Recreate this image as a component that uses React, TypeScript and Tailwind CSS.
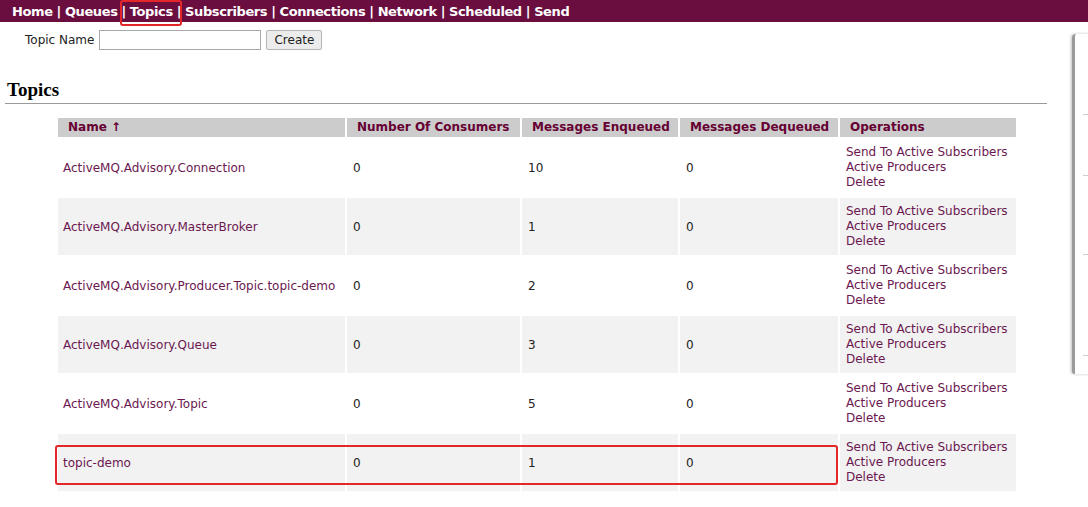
import React from 'react';

const navItems = ['Home', 'Queues', 'Topics', 'Subscribers', 'Connections', 'Network', 'Scheduled', 'Send'];

const topics = [
  { name: 'ActiveMQ.Advisory.Connection', consumers: 0, enqueued: 10, dequeued: 0 },
  { name: 'ActiveMQ.Advisory.MasterBroker', consumers: 0, enqueued: 1, dequeued: 0 },
  { name: 'ActiveMQ.Advisory.Producer.Topic.topic-demo', consumers: 0, enqueued: 2, dequeued: 0 },
  { name: 'ActiveMQ.Advisory.Queue', consumers: 0, enqueued: 3, dequeued: 0 },
  { name: 'ActiveMQ.Advisory.Topic', consumers: 0, enqueued: 5, dequeued: 0 },
  { name: 'topic-demo', consumers: 0, enqueued: 1, dequeued: 0 },
];

const headers = ['Name ↑', 'Number Of Consumers', 'Messages Enqueued', 'Messages Dequeued', 'Operations'];

export default function App() {
  return (
    <div className="relative w-[1088px] h-[507px] overflow-hidden bg-white font-['DejaVu_Sans',sans-serif] text-[12px] text-[#222]">
      {/* Nav bar */}
      <div className="h-[22px] bg-[#6a0d3f] pl-[12px] pt-[1px] flex items-center text-[13px] font-bold text-white tracking-[-0.4px] whitespace-nowrap">
        {navItems.map((item, i) => (
          <span key={item}>
            {item}
            {i < navItems.length - 1 && <span className="px-[4px]">|</span>}
          </span>
        ))}
      </div>

      {/* Create form */}
      <div className="flex items-center h-[30px] mt-[3px] pl-[25px] gap-[4px]">
        <span className="text-[12px] text-[#222]">Topic Name</span>
        <input className="ml-[1px] w-[162px] h-[20px] border border-[#a9a9a9] bg-white" />
        <button className="ml-[1px] w-[56px] h-[20px] border border-[#b5b5b5] bg-[#ececec] rounded-[2px] text-[12px] text-[#222]">
          Create
        </button>
      </div>

      {/* Heading */}
      <div className="mt-[24px] ml-[5px] mr-[41px] border-b border-[#9a9a9a] pl-[2px] pb-[2px]">
        <h2 className="font-['Liberation_Serif',serif] font-bold text-[19px] leading-[22px] text-black">Topics</h2>
      </div>

      {/* Table */}
      <table className="ml-[56px] mt-[12px] border-separate border-spacing-[2px] w-[962px]">
        <thead>
          <tr className="h-[19px]">
            {headers.map((h, i) => (
              <th
                key={h}
                className={`bg-[#cccccc] text-left pl-[10px] text-[12px] font-bold text-[#660033] leading-[19px] p-0 ${
                  i === 0 ? 'w-[287px]' : i === 1 ? 'w-[173px]' : i === 2 ? 'w-[156px]' : i === 3 ? 'w-[158px]' : 'w-[176px]'
                }`}
              >
                {h}
              </th>
            ))}
          </tr>
        </thead>
        <tbody>
          {topics.map((t, i) => (
            <tr key={t.name} className={`h-[57px] ${i % 2 === 1 ? 'bg-[#f2f2f2]' : 'bg-white'}`}>
              <td className="pl-[5px] text-[#6b1750] align-middle">{t.name}</td>
              <td className="pl-[6px] align-middle">{t.consumers}</td>
              <td className="pl-[6px] align-middle">{t.enqueued}</td>
              <td className="pl-[6px] align-middle">{t.dequeued}</td>
              <td className="pl-[6px] align-middle text-[#6b1750] leading-[15px]">
                <div>Send To Active Subscribers</div>
                <div>Active Producers</div>
                <div>Delete</div>
              </td>
            </tr>
          ))}
        </tbody>
      </table>

      {/* Side panel peeking in */}
      <div className="absolute left-[1072px] top-[34px] w-[30px] h-[340px] bg-white border-l-[3px] border-[#9a9a9a] rounded-tl-[4px] rounded-bl-[3px] shadow-[-1px_0_3px_rgba(0,0,0,0.25)] flex flex-col">
        <div className="mt-[80px] ml-[8px] w-[10px] border-t border-[#cfcfcf]" />
        <div className="mt-[60px] ml-[8px] w-[10px] border-t border-[#cfcfcf]" />
        <div className="mt-[78px] ml-[8px] w-[10px] border-t border-[#cfcfcf]" />
        <div className="mt-[100px] ml-[8px] w-[10px] border-t border-[#cfcfcf]" />
      </div>

      {/* Highlight annotations */}
      <div className="absolute left-[120px] top-[0px] w-[62px] h-[26px] border-2 border-[#e3262a] rounded-[3px]" />
      <div className="absolute left-[55px] top-[445px] w-[783px] h-[40px] border-2 border-[#e3262a] rounded-[3px]" />
    </div>
  );
}
